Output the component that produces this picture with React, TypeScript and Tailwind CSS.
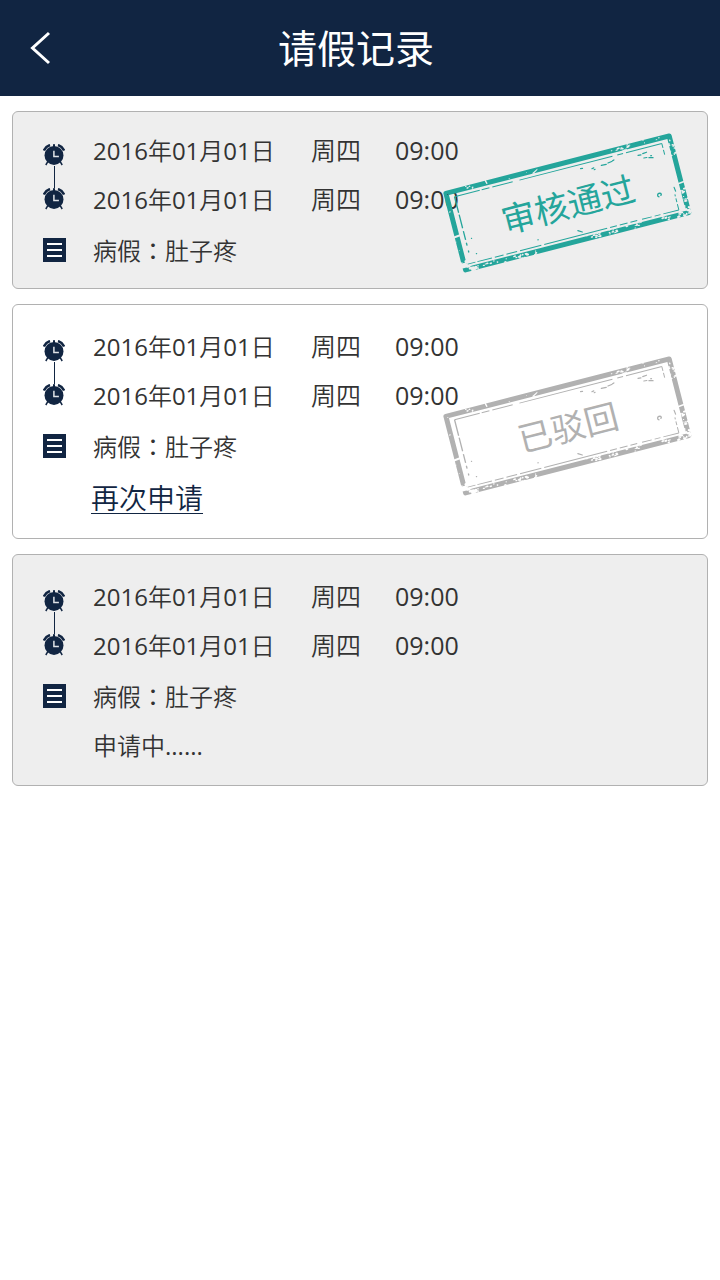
import React from "react";

type Status = "approved" | "rejected" | "pending";

interface Moment {
  date: string;
  weekday: string;
  time: string;
}

interface LeaveRecord {
  id: number;
  from: Moment;
  to: Moment;
  kind: string;
  reason: string;
  status: Status;
}

const day: Moment = { date: "2016年01月01日", weekday: "周四", time: "09:00" };

const records: LeaveRecord[] = [
  { id: 1, from: day, to: day, kind: "病假", reason: "肚子疼", status: "approved" },
  { id: 2, from: day, to: day, kind: "病假", reason: "肚子疼", status: "rejected" },
  { id: 3, from: day, to: day, kind: "病假", reason: "肚子疼", status: "pending" },
];

function ClockIcon() {
  return (
    <svg viewBox="0 0 22 22" className="block h-[22px] w-[22px]" aria-hidden="true">
      <g fill="none" stroke="#112542">
        <path d="M0.9 6.6C2 4 4 2 7 1.1" strokeWidth="2.6" />
        <path d="M21.1 6.6C20 4 18 2 15 1.1" strokeWidth="2.6" />
        <path d="M4.8 17.6L2.8 21M17.2 17.6l2 3.4" strokeWidth="1.5" />
      </g>
      <circle cx="11" cy="11.4" r="9.5" fill="#112542" />
      <rect x="10" y="0.2" width="2" height="3" fill="#112542" />
      <path d="M10.9 6.8v5.6h5" fill="none" stroke="#dfe2e6" strokeWidth="1.5" />
    </svg>
  );
}

function ListIcon() {
  return (
    <svg viewBox="0 0 23 24" className="block h-6 w-[23px]" aria-hidden="true">
      <rect width="23" height="24" fill="#112542" />
      <path d="M4 6h15M4 12h15M4 18h15" stroke="#fff" strokeWidth="2" />
    </svg>
  );
}

// Worn areas of the stamp frame: x, y, width, height, number of chips, chip size
const wornAreas: number[][] = [
  [4, 0, 28, 4, 9, 1.3],
  [172, 0, 20, 5, 14, 1.8],
  [40, 0, 60, 6, 3, 1.1],
  [205, 0, 20, 5, 4, 1.2],
  [229, 6, 7, 16, 12, 1.7],
  [229, 56, 7, 26, 24, 2],
  [0, 72, 14, 12, 16, 2.8],
  [12, 80, 66, 4, 24, 1.8],
  [20, 76, 14, 5, 8, 1.3],
  [128, 77, 16, 6, 12, 1.7],
  [150, 77, 14, 6, 10, 1.7],
  [168, 77, 16, 6, 9, 1.7],
  [206, 76, 8, 7, 8, 1.8],
  [222, 76, 14, 8, 18, 2],
  [0, 20, 2, 50, 3, 1.1],
];

function buildChips() {
  let seed = 7;
  const next = () => {
    seed = (seed * 16807) % 2147483647;
    return seed / 2147483647;
  };
  return wornAreas.flatMap(([x, y, w, h, count, size]) =>
    Array.from({ length: count }, () => ({
      x: x + next() * w,
      y: y + next() * h,
      rx: size * (0.35 + next() * 0.6),
      ry: size * (0.25 + next() * 0.35),
    })),
  );
}

const chips = buildChips();

function Stamp({ id, label, className }: { id: string; label: string; className: string }) {
  return (
    <svg
      viewBox="0 0 256 148"
      role="img"
      aria-label={label}
      className={`pointer-events-none absolute right-3 h-[148px] w-[256px] ${className}`}
    >
      <defs>
        <mask id={id} maskUnits="userSpaceOnUse" x="-6" y="-6" width="250" height="96">
          <rect x="-6" y="-6" width="250" height="96" fill="#fff" />
          <g fill="#000">
            {chips.map((c, i) => (
              <ellipse key={i} cx={c.x} cy={c.y} rx={c.rx} ry={c.ry} />
            ))}
            <path d="M-2 46l9-1v2l-9 1zM227 50l9-1v1.6l-9 1zM43 -1l1.4 0 1 4-1.4 0zM91 4l6-3v1l-5 3z" />
            <path d="M-2 74h6l3 5h-9z" />
          </g>
        </mask>
      </defs>
      <g transform="translate(4 64) rotate(-14.4)">
        <g mask={`url(#${id})`} fill="none" stroke="currentColor">
          <rect x="2.5" y="2" width="230.5" height="79" strokeWidth="5" strokeLinejoin="round" />
        </g>
        <g fill="none" stroke="currentColor" strokeWidth="1">
          <path d="M10 7.5H36M38 7.5H46M49 7.5H70M77 7.5H173M178 7.5H184M187 7.5H224" />
          <path d="M10 7.5V24M10 26V40M10 43V52M10 55V58M10 63V65" strokeWidth="1.3" />
          <path d="M224 7.5V12M224 14V19M224 60V62M224 64V68M224 70V76" />
          <path d="M6 76H14M16 76H31M34 76H43M46 76H57M60 76H82M85 76H150M153 76H160M163 76H171M174 76H181M186 76H196M199 76H205M208 76H224" />
        </g>
        <g fill="none" stroke="currentColor" strokeWidth="1.2" strokeLinecap="round">
          <path d="M139 11.5l2 .4M150 14.5l2-.4M152 16l1-.2M160 13.5l5 .4M167 13l4-.6M172 12l1.5-.6M198 13l3 .2M203 12.5l4-.4M203 17l3 .3M208 18l4 1M210 16.5l1 .2" />
          <path d="M208 58.5c-2-1.2-.8-4 1.6-3.4 1.6.4 1.6 1.6.6 2.4" strokeWidth="1.3" />
          <path d="M225 53l.5 4M121 71l4 2.4M80 70h.5M16 52h.2M17 68h.3" />
        </g>
        <text
          x="118"
          y="56"
          textAnchor="middle"
          fill="currentColor"
          className="font-['Noto_Sans_CJK_SC',sans-serif] text-[34px] font-normal"
        >
          {label}
        </text>
      </g>
    </svg>
  );
}

function MomentRow({ moment }: { moment: Moment }) {
  return (
    <div className="grid h-[49px] grid-cols-[184px_50px_auto] items-center gap-[34px] text-[25px] leading-none">
      <span className="text-2xl leading-none">{moment.date}</span>
      <span>{moment.weekday}</span>
      <span>{moment.time}</span>
    </div>
  );
}

function RecordCard({ record }: { record: LeaveRecord }) {
  const { status } = record;
  const look = {
    approved: "bg-[#eeeeee] pt-[14px] pb-3",
    rejected: "bg-white pt-[17px] pb-[14px]",
    pending: "bg-[#eeeeee] pt-[17px] pb-[15px]",
  }[status];

  return (
    <li className={`relative rounded-md border border-[#b1b1b1] pr-4 pl-[30px] ${look}`}>
      <div className="flex gap-[26px]">
        <div className="flex w-6 flex-col items-start pt-[18px]">
          <ClockIcon />
          <div className="ml-[11px] h-[22px] w-px bg-[#112542]" />
          <ClockIcon />
        </div>
        <div>
          <MomentRow moment={record.from} />
          <MomentRow moment={record.to} />
        </div>
      </div>
      <div className="flex h-[52px] items-center gap-[26px]">
        <div className="w-6">
          <ListIcon />
        </div>
        <p className="text-2xl leading-none">
          {record.kind}
          <span className="font-['Noto_Sans_CJK_TC',sans-serif]">：</span>
          {record.reason}
        </p>
      </div>
      {status === "rejected" && (
        <div className="flex h-[52px] items-center pl-12">
          <a
            href="#reapply"
            className="text-[28px] leading-none text-[#112542] underline decoration-1 underline-offset-4"
          >
            再次申请
          </a>
        </div>
      )}
      {status === "pending" && (
        <div className="flex h-12 items-center pl-[50px] text-2xl leading-none">申请中......</div>
      )}
      {status === "approved" && (
        <Stamp id="wear-approved" label="审核通过" className="top-4 text-[#24a59b]" />
      )}
      {status === "rejected" && (
        <Stamp id="wear-rejected" label="已驳回" className="top-[46px] text-[#b1b1b1]" />
      )}
    </li>
  );
}

export default function App() {
  return (
    <div className="min-h-screen bg-white font-['Open_Sans','Noto_Sans_CJK_SC_DemiLight','Noto_Sans_CJK_SC',sans-serif] font-normal text-[#333333]">
      <header className="grid h-24 grid-cols-[1fr_auto_1fr] items-center bg-[#112542] pr-2 text-white">
        <button type="button" aria-label="返回" className="ml-5 flex h-12 w-10 items-center justify-center">
          <svg viewBox="0 0 22 34" className="h-[34px] w-[22px]" aria-hidden="true">
            <path d="M20 2L3.5 17 20 32" fill="none" stroke="#fff" strokeWidth="3" />
          </svg>
        </button>
        <h1 className="pb-1 font-['Noto_Sans_CJK_SC',sans-serif] text-[39px] leading-none font-normal">
          请假记录
        </h1>
      </header>
      <main className="px-3 pt-[15px] pb-4">
        <ul className="flex flex-col gap-[15px]">
          {records.map((r) => (
            <RecordCard key={r.id} record={r} />
          ))}
        </ul>
      </main>
    </div>
  );
}
